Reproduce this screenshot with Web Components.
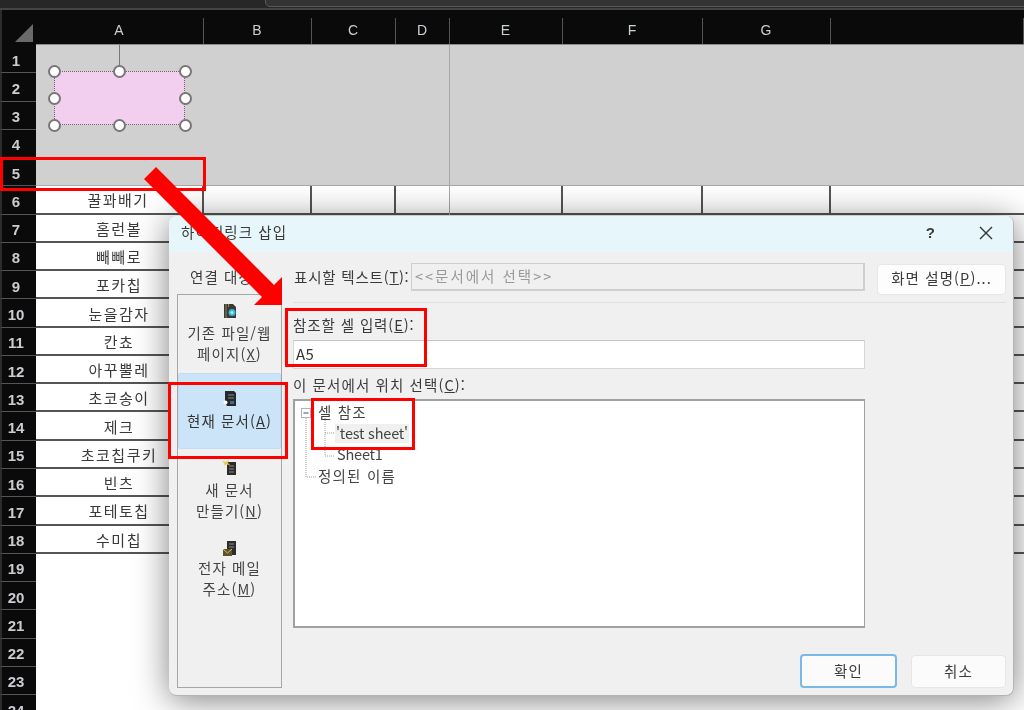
<!DOCTYPE html>
<html lang="ko">
<head>
<meta charset="utf-8">
<title>하이퍼링크 삽입</title>
<style>
  html, body { margin: 0; padding: 0; background: #fff; overflow: hidden; }
  body { font-family: "Noto Sans CJK KR", "Noto Sans", sans-serif; color: #333; }
</style>
</head>
<body>
<xl-app>
  <xl-sheet>
    <shape-selection></shape-selection>
  </xl-sheet>

  <link-dialog heading="하이퍼링크 삽입">
    <nav-item slot="nav">
      <svg slot="icon" width="16" height="17" viewBox="0 0 16 17"><path d="M2 2h9l3 3v11H2z" fill="#3c3a30"/><path d="M4 2v14M6.500 2v3" stroke="#8b8768" stroke-width="1"/><circle cx="10" cy="10.500" r="3.500" fill="#38b6d8"/><circle cx="10" cy="10.500" r="1.500" fill="#a8ecf5"/></svg>
      기존 파일/웹<br>페이지(<u>X</u>)
    </nav-item>
    <nav-item slot="nav" selected>
      <svg slot="icon" width="16" height="17" viewBox="0 0 16 17"><path d="M3 1h9l2 2v13H5l-2-3z" fill="#26282c"/><path d="M6 5h6M6 8h6" stroke="#7c8794" stroke-width="1"/><circle cx="3.500" cy="12.500" r="2" fill="#fff"/><path d="M8 11h4v3H8z" fill="#3d6d8f"/></svg>
      현재 문서(<u>A</u>)
    </nav-item>
    <nav-item slot="nav">
      <svg slot="icon" width="18" height="17" viewBox="0 0 18 17"><path d="M6 3h9v13H6z" fill="#2b2b2b"/><path d="M8 7h5M8 10h5M8 13h5" stroke="#8a8a8a" stroke-width="1"/><path d="M1 2l4 1 3-2-1 3 2 2-4-.500-2 1 .500-2z" fill="#e6c84a"/></svg>
      새 문서<br>만들기(<u>N</u>)
    </nav-item>
    <nav-item slot="nav">
      <svg slot="icon" style="margin-top:3px" width="16" height="17" viewBox="0 0 16 17"><path d="M5 1h9v14H5z" fill="#2d2d2d"/><path d="M7 4h5M7 7h5" stroke="#8a8a8a" stroke-width="1"/><path d="M1 9h9v7H1z" fill="#5c5330"/><path d="M1 9l4.500 4L10 9" fill="none" stroke="#d8c04c" stroke-width="1"/></svg>
      전자 메일<br>주소(<u>M</u>)
    </nav-item>

    <span slot="display-label" style="letter-spacing:.8px">표시할 텍스트(<u>T</u>):</span>
    <xl-field slot="display-field" disabled>&lt;&lt;문서에서 선택&gt;&gt;</xl-field>
    <xl-button slot="tip" flat>화면 설명(<u>P</u>)...</xl-button>

    <span slot="ref-label" style="letter-spacing:.9px">참조할 셀 입력(<u>E</u>):</span>
    <xl-field slot="ref-field">A5</xl-field>

    <span slot="tree-label">이 문서에서 위치 선택(<u>C</u>):</span>
    <doc-tree slot="tree"></doc-tree>

    <xl-button slot="ok" primary>확인</xl-button>
    <xl-button slot="cancel">취소</xl-button>
  </link-dialog>

  <red-box x="0" y="157" w="206" h="34"></red-box>
  <red-box x="285" y="308" w="142" h="59"></red-box>
  <red-box x="168" y="382" w="120" h="77"></red-box>
  <red-box x="311" y="398" w="104" h="52"></red-box>
  <red-arrow></red-arrow>
</xl-app>

<script>
// shared type settings for the hangul labels
const FONT = '"Noto Sans CJK KR", "Noto Sans", sans-serif';

class XlApp extends HTMLElement {
  constructor() {
    super();
    this.attachShadow({ mode: 'open' });
    this.shadowRoot.innerHTML = `
      <style>
        :host {
          display: block;
          position: relative;
          width: 1024px;
          height: 710px;
          overflow: hidden;
          font-family: ${FONT};
          filter: blur(.4px);
        }
      </style>
      <slot></slot>
    `;
  }
}

class XlSheet extends HTMLElement {
  constructor() {
    super();
    this.attachShadow({ mode: 'open' });

    const snacks = ['꿀꽈배기', '홈런볼', '빼빼로', '포카칩', '눈을감자', '칸쵸', '아꾸뿔레',
      '초코송이', '제크', '초코칩쿠키', '빈츠', '포테토칩', '수미칩'];
    const columns = ['A', 'B', 'C', 'D', 'E', 'F', 'G', ''];

    let cells = '<div class="corner"><i></i></div>';
    columns.forEach(c => { cells += `<div class="col">${c}</div>`; });

    // rows 1-5 are one grey frozen block
    cells += '<div class="frozen"><b></b></div>';
    for (let r = 1; r <= 24; r++) {
      cells += `<div class="row" style="grid-row:${r + 1}">${r}</div>`;
    }
    snacks.forEach((name, i) => {
      columns.forEach((c, j) => {
        let cls = 'cell';
        if (i === 0 && j < 7) cls += c === 'D' ? ' first pale' : ' first';
        cells += `<div class="${cls}" style="grid-row:${i + 7};grid-column:${j + 2}">${j === 0 ? name : ''}</div>`;
      });
    });

    this.shadowRoot.innerHTML = `
      <style>
        :host { display: block; position: relative; width: 1024px; height: 710px; background: #fff; }
        .top { height: 8px; background: #272727; border-bottom: 2px solid #454545; position: relative; }
        .tab { position: absolute; left: 265px; right: -4px; top: -4px; height: 11px; background: #333;
               border: 1px solid #5a5a5a; border-radius: 0 0 0 5px; box-sizing: border-box; }
        .grid {
          display: grid;
          grid-template-columns: 36px 168px 108px 84px 54px 113px 140px 128px 193px;
          grid-template-rows: 35px repeat(24, 28.27px);
        }
        .corner { background: #0a0a0a; position: relative; border-left: 2px solid #2c2c2c; box-sizing: border-box; }
        .corner i { position: absolute; right: 3px; bottom: 3px; width: 18px; height: 18px;
                    background: #6a6a6a; clip-path: polygon(100% 0, 100% 100%, 0 100%); }
        .col {
          background: #0a0a0a; color: #c9d0d6; font: 14px "Liberation Sans", sans-serif;
          display: flex; align-items: center; justify-content: center;
          padding: 5px 2px 0 0; box-sizing: border-box;
          border-bottom: 1px solid #8a8a8a;
          background-image: linear-gradient(#555, #555);
          background-size: 1px 26px; background-position: right bottom; background-repeat: no-repeat;
        }
        .row {
          grid-column: 1; background: #0a0a0a; color: #c9ccd0;
          font: bold 15px "Liberation Sans", sans-serif;
          display: flex; align-items: center; justify-content: center;
          box-sizing: border-box; border-left: 2px solid #2c2c2c; border-bottom: 1px solid #555;
          padding: 3px 6px 0 0; white-space: nowrap;
        }
        .frozen {
          grid-column: 2 / -1; grid-row: 2 / span 5;
          background: #d0d0d0; border-bottom: 1px solid #a8a8a8; position: relative; box-sizing: border-box;
        }
        .frozen b { position: absolute; left: 413px; top: 0; height: 170px; width: 1px; background: #a8a8a8; }
        .cell {
          border-bottom: 2px solid #555; box-sizing: border-box; background: #fff;
          font-size: 15px; letter-spacing: 1.500px; color: #3a3a3a; line-height: 1;
          display: flex; align-items: center; justify-content: center; white-space: nowrap;
          padding: 1px 2px 0 0;
        }
        .first { border-right: 2px solid #555; }
        .pale { border-right: 1px solid #a8a8a8; }
      </style>
      <div class="top"><div class="tab"></div></div>
      <div class="grid">${cells}</div>
      <slot></slot>
    `;
  }
}

class ShapeSelection extends HTMLElement {
  constructor() {
    super();
    this.attachShadow({ mode: 'open' });
    const spots = [[0, 0], [65, 0], [131, 0], [0, 27], [131, 27], [0, 54], [65, 54], [131, 54]];
    const handles = spots.map(([x, y]) => `<i style="left:${x}px;top:${y}px"></i>`).join('');
    this.shadowRoot.innerHTML = `
      <style>
        :host { display: block; position: absolute; left: 54px; top: 71px; width: 131px; height: 54px;
                background: #f2cfee; outline: 1px dotted #666; outline-offset: -1px; }
        .stem { position: absolute; left: 65px; top: -26px; width: 1px; height: 26px; background: #777; }
        i { position: absolute; width: 9px; height: 9px; margin: -6.500px 0 0 -6.500px;
            background: #fff; border: 2px solid #777; border-radius: 50%; }
      </style>
      <div class="stem"></div>${handles}
    `;
  }
}

class LinkDialog extends HTMLElement {
  constructor() {
    super();
    this.attachShadow({ mode: 'open' });
    this.shadowRoot.innerHTML = `
      <style>
        :host {
          display: flex; flex-direction: column;
          position: absolute; left: 169px; top: 216px; width: 845px; height: 480px;
          box-sizing: border-box; background: #f0f0f0; border-radius: 8px;
          border: 1px solid #b4b4b4; border-width: 0 1px 1px 0;
          box-shadow: 0 4px 34px rgba(0, 0, 0, .5);
          font-size: 14.500px; letter-spacing: 1.100px; color: #3a3a3a; line-height: 1;
          overflow: hidden;
        }
        header {
          height: 36px; flex: none; background: #e6f6fa;
          display: flex; align-items: center; padding: 0 20px 3px 12px; box-sizing: border-box;
        }
        header .title { flex: 1; }
        .help { font: bold 15px "Liberation Sans", sans-serif; width: 14px; margin-right: 41px; text-align: center; }
        header svg { display: block; }
        .body { flex: 1; display: flex; padding: 0 7px 7px 8px; gap: 11px; min-height: 0; }
        .left { width: 105px; flex: none; display: flex; flex-direction: column; }
        .left .cap { height: 42px; flex: none; display: flex; align-items: center; padding: 8px 0 0 13px; box-sizing: border-box; }
        .panel { flex: 1; border: 1px solid #a6a6a6; display: flex; flex-direction: column; background: #f0f0f0; }
        .right { flex: 1; display: flex; flex-direction: column; min-width: 0; }
        .top-row { display: grid; grid-template-columns: 118px 454px 129px; column-gap: 0; margin-top: 11px; align-items: start; }
        .top-row .lbl { height: 28px; display: flex; align-items: center; padding-left: 1px; white-space: nowrap; }
        .top-row .btn { margin-left: 12px; margin-top: 1px; }
        .rule { height: 1px; background: #e0e0e0; margin-top: 7px; }
        .lbl2 { height: 16px; display: flex; align-items: center; padding-left: 0; white-space: nowrap; }
        .wide { width: 572px; }
        .foot { display: flex; justify-content: flex-end; gap: 14px; margin-top: 26px; }
      </style>
      <header>
        <span class="title">${this.getAttribute('heading')}</span>
        <span class="help">?</span>
        <svg width="14" height="14" viewBox="0 0 14 14"><path d="M1 1l12 12M13 1L1 13" stroke="#333" stroke-width="1.400" fill="none"/></svg>
      </header>
      <div class="body">
        <div class="left">
          <div class="cap">연결 대상:</div>
          <div class="panel"><slot name="nav"></slot></div>
        </div>
        <div class="right">
          <div class="top-row">
            <div class="lbl"><slot name="display-label"></slot></div>
            <slot name="display-field"></slot>
            <div class="btn"><slot name="tip"></slot></div>
          </div>
          <div class="rule"></div>
          <div class="lbl2" style="margin-top:14px"><slot name="ref-label"></slot></div>
          <div class="wide" style="margin-top:7px;height:29px;display:flex"><slot name="ref-field"></slot></div>
          <div class="lbl2" style="margin-top:8px"><slot name="tree-label"></slot></div>
          <div class="wide" style="margin-top:6px"><slot name="tree"></slot></div>
          <div class="foot"><slot name="ok"></slot><slot name="cancel"></slot></div>
        </div>
      </div>
    `;
  }
}

class NavItem extends HTMLElement {
  constructor() {
    super();
    this.attachShadow({ mode: 'open' });
    this.shadowRoot.innerHTML = `
      <style>
        :host {
          display: flex; flex-direction: column; align-items: center; justify-content: center;
          height: 78px; box-sizing: border-box; padding-bottom: 2px;
          text-align: center; line-height: 21px; font-size: 14.500px; letter-spacing: 1.100px; color: #444;
        }
        :host([selected]) {
          background: #cce4f7; height: 76px; margin: 0 0 3px;
          border: 1px solid #c2dcf2; color: #333; border-radius: 2px;
        }
        .icon { height: 17px; margin-bottom: 3px; }
        ::slotted(svg) { display: block; }
      </style>
      <div class="icon"><slot name="icon"></slot></div>
      <div><slot></slot></div>
    `;
  }
}

class XlField extends HTMLElement {
  constructor() {
    super();
    this.attachShadow({ mode: 'open' });
    this.shadowRoot.innerHTML = `
      <style>
        :host {
          display: flex; align-items: center; width: 100%; height: 29px; box-sizing: border-box;
          background: #fff; border: 1px solid #d6d6d6; border-top-color: #c4c4c4;
          padding: 0 2px 2px; font-size: 15px; letter-spacing: .3px; color: #333;
        }
        :host([disabled]) { background: #f0f0f0; border: 2px solid #cfcfcf; border-width: 1px 2px 2px 1px; color: #9a9a9a;
                            height: 28px; font-size: 14.500px; letter-spacing: 2px; padding: 0 3px; }
      </style>
      <slot></slot>
    `;
  }
}

class XlButton extends HTMLElement {
  constructor() {
    super();
    this.attachShadow({ mode: 'open' });
    this.shadowRoot.innerHTML = `
      <style>
        :host {
          display: flex; align-items: center; justify-content: center;
          width: 95px; height: 33px; box-sizing: border-box; margin-top: 1px;
          background: #fbfbfb; border: 1px solid #e6e6e6; border-radius: 4px;
          font-size: 14.500px; letter-spacing: 1.100px; color: #3a3a3a;
        }
        :host([primary]) { width: 97px; height: 34px; margin-top: 0; border: 2px solid #7ab8e8; }
        :host([flat]) { width: 129px; height: 31px; margin-top: 0; background: #fdfdfd; padding-bottom: 2px; }
      </style>
      <slot></slot>
    `;
  }
}

class DocTree extends HTMLElement {
  constructor() {
    super();
    this.attachShadow({ mode: 'open' });
    this.shadowRoot.innerHTML = `
      <style>
        :host {
          display: block; position: relative; height: 229px; box-sizing: border-box; background: #fff;
          border: 1px solid #a0a0a0; border-width: 2px 1px 2px 2px; padding-top: .500px;
          font-size: 14.500px; letter-spacing: 1.200px; color: #444;
        }
        .node { height: 21.300px; display: flex; align-items: center; }
        .l1 { padding-left: 23px; }
        .l2 { padding-left: 42px; letter-spacing: -.2px; }
        .hl { background: #f0f0f0; padding: 2px 1px; margin-left: -2px; }
        svg { position: absolute; left: 0; top: 0; }
      </style>
      <svg width="50" height="90" fill="none" stroke="#9c9c9c" stroke-width="1" stroke-dasharray="1 1">
        <rect x="6.500" y="7.500" width="9" height="9" fill="#fff" stroke-dasharray="none" stroke="#a8b4c4"/>
        <path d="M8.500 12h5" stroke="#33507a" stroke-dasharray="none"/>
        <path d="M11 17v59h10M30 17v38M30 32h9M30 55h9"/>
      </svg>
      <div class="node l1">셀 참조</div>
      <div class="node l2"><span class="hl">'test sheet'</span></div>
      <div class="node l2">Sheet1</div>
      <div class="node l1">정의된 이름</div>
    `;
  }
}

class RedBox extends HTMLElement {
  constructor() {
    super();
    this.attachShadow({ mode: 'open' });
    const [x, y, w, h] = ['x', 'y', 'w', 'h'].map(a => this.getAttribute(a));
    this.shadowRoot.innerHTML = `
      <style>
        :host {
          display: block; position: absolute; left: ${x}px; top: ${y}px; width: ${w}px; height: ${h}px;
          box-sizing: border-box; border: 3.500px solid #f00;
        }
      </style>
    `;
  }
}

class RedArrow extends HTMLElement {
  constructor() {
    super();
    this.attachShadow({ mode: 'open' });
    this.shadowRoot.innerHTML = `
      <style>
        :host { display: block; position: absolute; left: 0; top: 0; width: 0; height: 0; }
        svg { position: absolute; left: 0; top: 0; overflow: visible; }
      </style>
      <svg width="1" height="1">
        <polygon fill="#f00" points="156,167 274,285 282,277 282,305 254,305 262,297 144,179"/>
      </svg>
    `;
  }
}

customElements.define('xl-app', XlApp);
customElements.define('xl-sheet', XlSheet);
customElements.define('shape-selection', ShapeSelection);
customElements.define('link-dialog', LinkDialog);
customElements.define('nav-item', NavItem);
customElements.define('xl-field', XlField);
customElements.define('xl-button', XlButton);
customElements.define('doc-tree', DocTree);
customElements.define('red-box', RedBox);
customElements.define('red-arrow', RedArrow);
</script>
</body>
</html>
